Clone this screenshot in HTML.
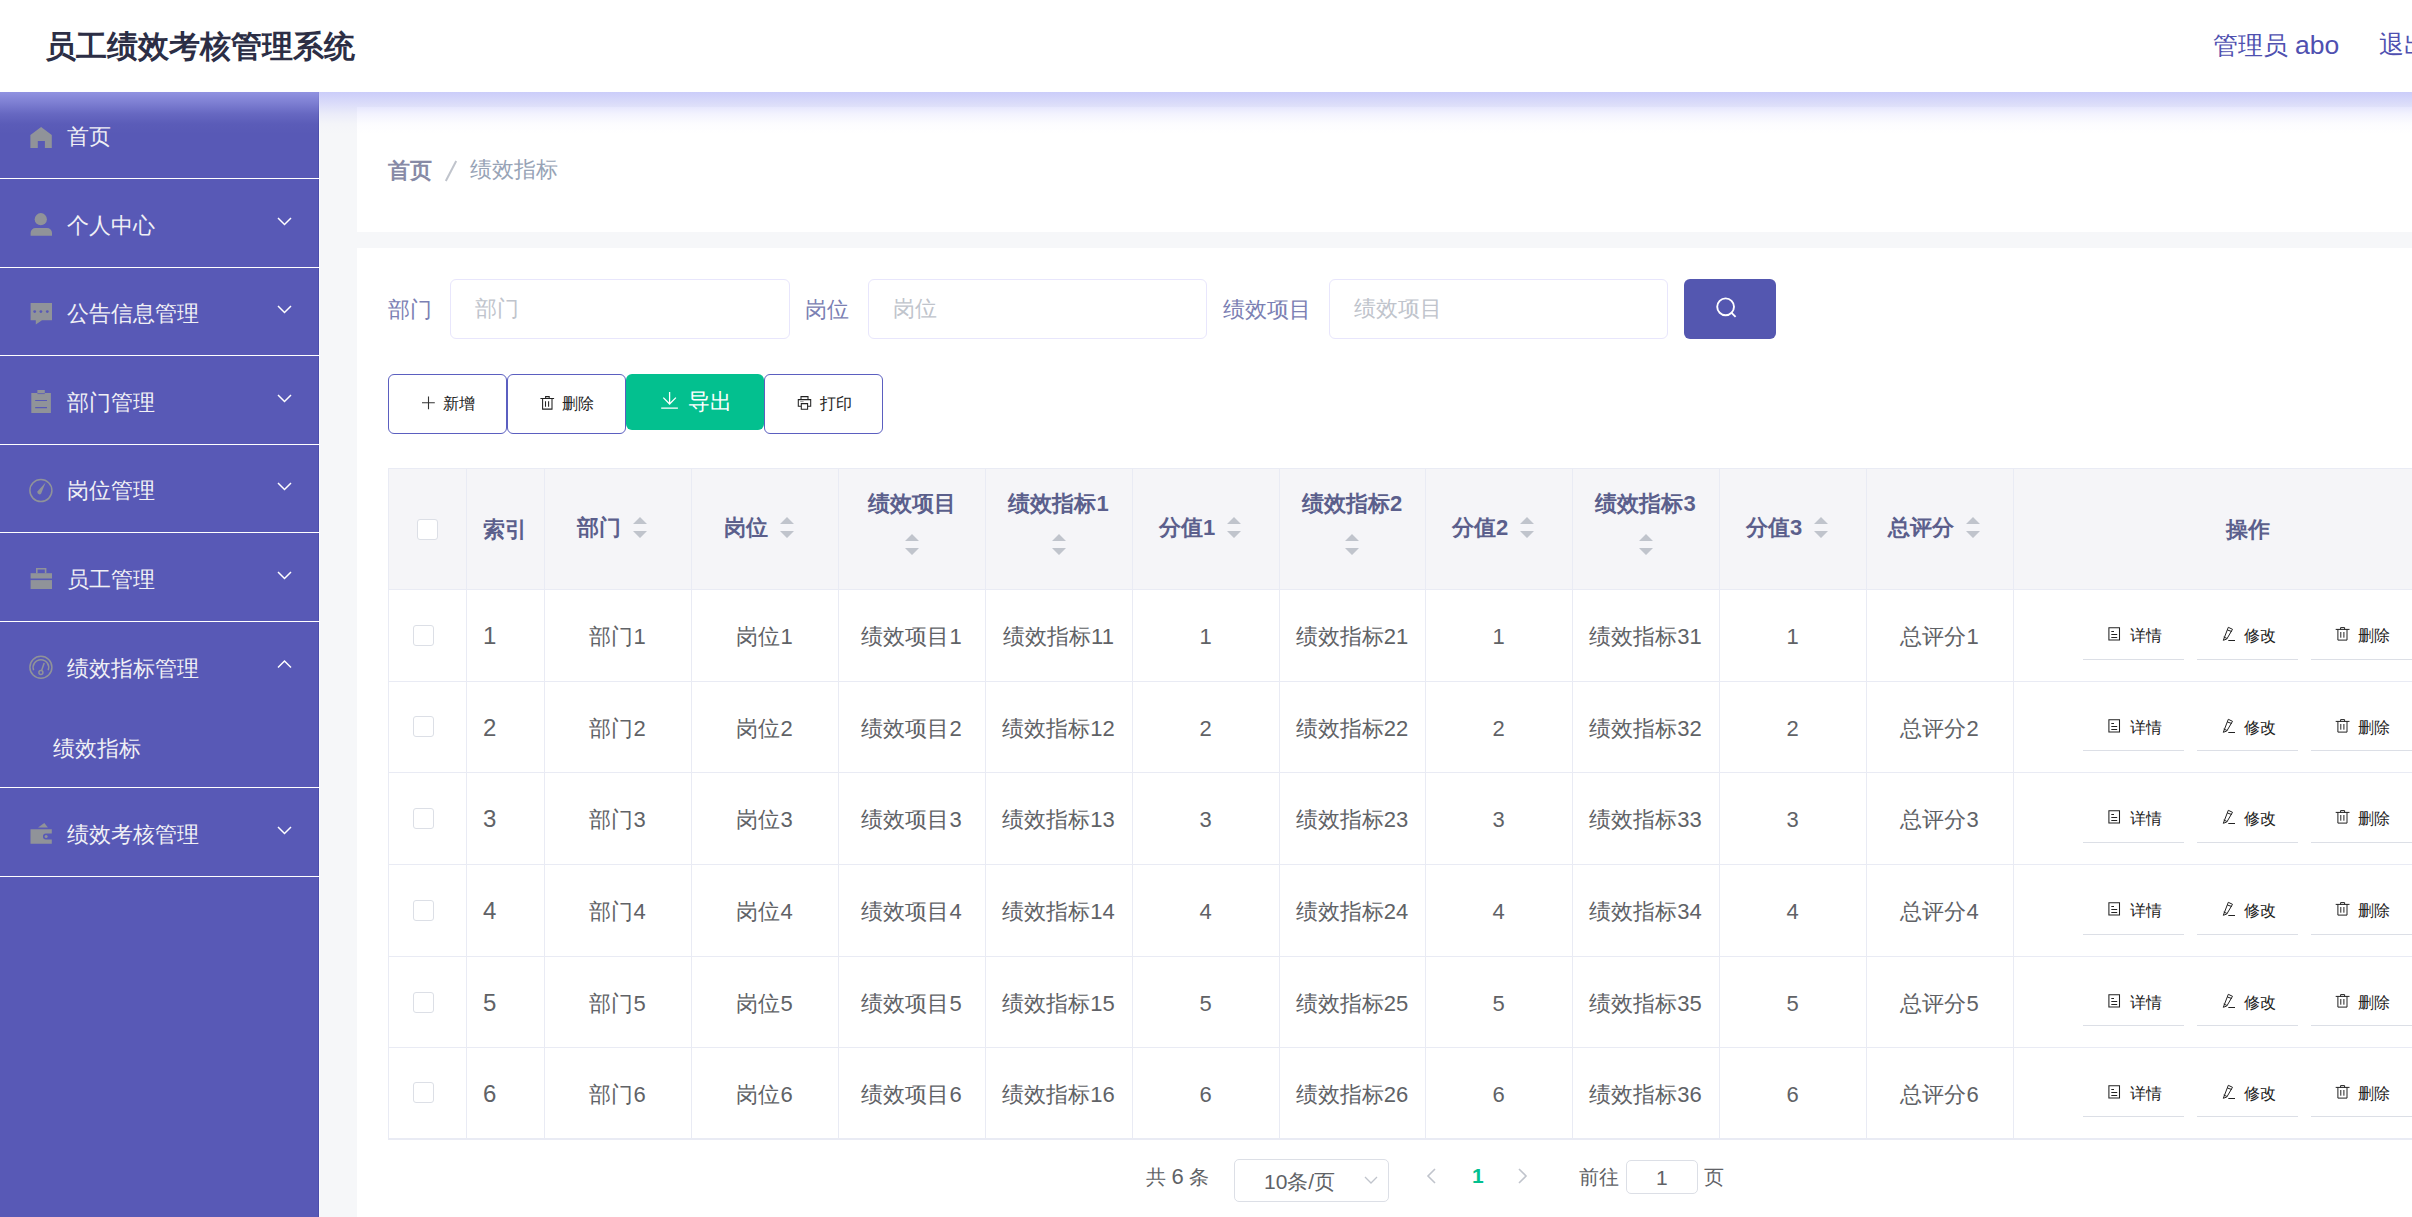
<!DOCTYPE html><html><head><meta charset="utf-8"><title>绩效指标</title><style>
*{margin:0;padding:0;box-sizing:border-box}
html,body{width:2412px;height:1217px;overflow:hidden}
body{position:relative;background:#f6f7f9;font-family:"Liberation Sans", sans-serif;}
.t{position:absolute;white-space:nowrap;line-height:1;}
.abs{position:absolute;overflow:visible}
.card{position:absolute;background:#fff}
.inp{position:absolute;border:1px solid #e8e6fc;border-radius:6px;background:#fff}
.obtn{position:absolute;border:1px solid #5b5fc0;border-radius:6px;background:#fff}
.vl{position:absolute;width:1px;background:#e9ebf4}
.hl{position:absolute;height:1px;background:#e9ebf4}
.cb{position:absolute;width:21px;height:21px;border:1px solid #dcdfe6;border-radius:3px;background:#fff}
.ul{position:absolute;height:1px;background:#dcdfe6}
.cell{position:absolute;display:flex;align-items:center;justify-content:center;white-space:nowrap;line-height:1}
</style></head><body>
<div class="abs" style="left:0;top:0;width:2412px;height:92px;background:#fff"></div>
<span id="title" class="t" style="left:45px;top:31px;font-size:31px;color:#2c2e45;font-weight:bold;">员工绩效考核管理系统</span>
<span id="user" class="t" style="left:2213px;top:32px;font-size:25px;color:#4f50b0;font-weight:normal;">管理员 <span style="font-size:26.5px">abo</span></span>
<span id="logout" class="t" style="left:2379px;top:32px;font-size:25px;color:#4f50b0;font-weight:normal;">退出</span>
<div class="abs" style="left:0;top:92px;width:319px;height:1125px;background:#5859b6"></div>
<div class="abs" style="left:318px;top:92px;width:1px;height:1125px;background:#4c4eab"></div>
<div class="abs" style="left:319px;top:92px;width:1px;height:1125px;background:#fbfbfe"></div>
<div class="abs" style="left:0;top:178px;width:319px;height:1px;background:#fff"></div>
<div class="abs" style="left:0;top:267px;width:319px;height:1px;background:#fff"></div>
<div class="abs" style="left:0;top:355px;width:319px;height:1px;background:#fff"></div>
<div class="abs" style="left:0;top:444px;width:319px;height:1px;background:#fff"></div>
<div class="abs" style="left:0;top:532px;width:319px;height:1px;background:#fff"></div>
<div class="abs" style="left:0;top:621px;width:319px;height:1px;background:#fff"></div>
<div class="abs" style="left:0;top:787px;width:319px;height:1px;background:#fff"></div>
<div class="abs" style="left:0;top:876px;width:319px;height:1px;background:#fff"></div>
<span id="m0" class="t" style="left:67px;top:126px;font-size:22px;color:#f0f0f5;font-weight:500;">首页</span>
<span id="m1" class="t" style="left:67px;top:215px;font-size:22px;color:#f0f0f5;font-weight:500;">个人中心</span>
<svg class="abs" style="left:277px;top:217px;" width="15" height="9" viewBox="0 0 15 9"><path d="M1 1l6.5 6.5L14 1" fill="none" stroke="#fff" stroke-width="1.5"/></svg>
<span id="m2" class="t" style="left:67px;top:303px;font-size:22px;color:#f0f0f5;font-weight:500;">公告信息管理</span>
<svg class="abs" style="left:277px;top:305px;" width="15" height="9" viewBox="0 0 15 9"><path d="M1 1l6.5 6.5L14 1" fill="none" stroke="#fff" stroke-width="1.5"/></svg>
<span id="m3" class="t" style="left:67px;top:392px;font-size:22px;color:#f0f0f5;font-weight:500;">部门管理</span>
<svg class="abs" style="left:277px;top:394px;" width="15" height="9" viewBox="0 0 15 9"><path d="M1 1l6.5 6.5L14 1" fill="none" stroke="#fff" stroke-width="1.5"/></svg>
<span id="m4" class="t" style="left:67px;top:480px;font-size:22px;color:#f0f0f5;font-weight:500;">岗位管理</span>
<svg class="abs" style="left:277px;top:482px;" width="15" height="9" viewBox="0 0 15 9"><path d="M1 1l6.5 6.5L14 1" fill="none" stroke="#fff" stroke-width="1.5"/></svg>
<span id="m5" class="t" style="left:67px;top:569px;font-size:22px;color:#f0f0f5;font-weight:500;">员工管理</span>
<svg class="abs" style="left:277px;top:571px;" width="15" height="9" viewBox="0 0 15 9"><path d="M1 1l6.5 6.5L14 1" fill="none" stroke="#fff" stroke-width="1.5"/></svg>
<span id="m6" class="t" style="left:67px;top:658px;font-size:22px;color:#f0f0f5;font-weight:500;">绩效指标管理</span>
<svg class="abs" style="left:277px;top:660px;" width="15" height="9" viewBox="0 0 15 9"><path d="M1 7.5L7.5 1L14 7.5" fill="none" stroke="#fff" stroke-width="1.5"/></svg>
<span id="m7" class="t" style="left:67px;top:824px;font-size:22px;color:#f0f0f5;font-weight:500;">绩效考核管理</span>
<svg class="abs" style="left:277px;top:826px;" width="15" height="9" viewBox="0 0 15 9"><path d="M1 1l6.5 6.5L14 1" fill="none" stroke="#fff" stroke-width="1.5"/></svg>
<span id="msub" class="t" style="left:53px;top:738px;font-size:22px;color:#f0f0f5;font-weight:500;">绩效指标</span>
<svg class="abs" style="left:0;top:0" width="320" height="900">
<path d="M30.4 134.9L41.1 127L51.8 134.9V148H44.9V141.1H37.8V148H30.4Z" fill="#909399"/>
<circle cx="40.8" cy="219.2" r="6.1" fill="#909399"/>
<path d="M30.6 235.8V233a5 5 0 0 1 5-5h11.4a5 5 0 0 1 5 5v2.8z" fill="#909399"/>
<path d="M30.6 303.1H52V320.2H42L35.8 324.5V320.2H30.6Z" fill="#909399"/>
<circle cx="34.7" cy="311.6" r="1.4" fill="#5859b6"/><circle cx="40.9" cy="311.6" r="1.4" fill="#5859b6"/><circle cx="47.3" cy="311.6" r="1.4" fill="#5859b6"/>
<path d="M31.3 393H37.4V390.1H44.8V393H50.9V412.9H31.3Z" fill="#909399"/>
<path d="M37.4 393.6H44.8" stroke="#5859b6" stroke-width="0.8"/>
<path d="M35.2 400.5H47M35.2 407.6H47" stroke="#5859b6" stroke-width="1.1"/>
<circle cx="40.9" cy="490.6" r="11" fill="none" stroke="#909399" stroke-width="1.5"/>
<path d="M45.6 482.6L41.2 493.6A2.2 2.2 0 0 1 37.4 491.6Z" fill="#909399"/>
<path d="M36.8 568.8H45.6V573.2" fill="none" stroke="#909399" stroke-width="1.6"/><path d="M36.8 568V573.2" stroke="#909399" stroke-width="1.6"/>
<rect x="30.6" y="573.2" width="21.4" height="5.3" fill="#909399"/>
<rect x="30.6" y="580.1" width="21.4" height="8.9" fill="#909399"/>
<circle cx="40.9" cy="667.2" r="11" fill="none" stroke="#909399" stroke-width="1.5"/>
<path d="M33.6 670.2A7.8 7.8 0 1 1 48.2 670.2" fill="none" stroke="#909399" stroke-width="1.5"/>
<circle cx="40.9" cy="672.6" r="2" fill="none" stroke="#909399" stroke-width="1.5"/>
<path d="M41.6 670.6L44.2 663" stroke="#909399" stroke-width="1.5"/>
<path d="M30.5 829.2H51.8V833.5H46A3 3 0 0 0 46 839.6H51.8V843.8H30.5Z" fill="#909399"/>
<circle cx="46.1" cy="836.5" r="1.5" fill="#909399"/>
<path d="M38 827.4H47.9L44.3 823Z" fill="#909399"/>
</svg>
<div class="card" style="left:357px;top:107px;width:2055px;height:125px"></div>
<div class="card" style="left:357px;top:248px;width:2055px;height:969px"></div>
<span id="bc1" class="t" style="left:388px;top:160px;font-size:22px;color:#878aa6;font-weight:bold;">首页</span>
<svg class="abs" style="left:440px;top:155px;" width="22" height="30" viewBox="0 0 22 30"><path d="M16.2 6L5.8 26" stroke="#c0c4cc" stroke-width="2"/></svg>
<span id="bc3" class="t" style="left:470px;top:159px;font-size:22px;color:#97a3b6;font-weight:normal;">绩效指标</span>
<span id="l1" class="t" style="left:388px;top:299px;font-size:22px;color:#7b80b3;font-weight:normal;">部门</span>
<div class="inp" style="left:450px;top:279px;width:340px;height:60px"></div>
<span id="l1p" class="t" style="left:475px;top:298px;font-size:22px;color:#c0c4cc;font-weight:normal;">部门</span>
<span id="l2" class="t" style="left:805px;top:299px;font-size:22px;color:#7b80b3;font-weight:normal;">岗位</span>
<div class="inp" style="left:868px;top:279px;width:339px;height:60px"></div>
<span id="l2p" class="t" style="left:893px;top:298px;font-size:22px;color:#c0c4cc;font-weight:normal;">岗位</span>
<span id="l3" class="t" style="left:1223px;top:299px;font-size:22px;color:#7b80b3;font-weight:normal;">绩效项目</span>
<div class="inp" style="left:1329px;top:279px;width:339px;height:60px"></div>
<span id="l3p" class="t" style="left:1354px;top:298px;font-size:22px;color:#c0c4cc;font-weight:normal;">绩效项目</span>
<div class="abs" style="left:1684px;top:279px;width:92px;height:60px;background:#5457b0;border-radius:6px"></div>
<svg class="abs" style="left:1684px;top:279px;" width="92" height="60" viewBox="0 0 92 60"><circle cx="41.6" cy="27.8" r="8.4" fill="none" stroke="#fff" stroke-width="1.9"/><path d="M47.6 33.8L51.6 37.8" stroke="#fff" stroke-width="1.9"/></svg>
<div class="obtn" style="left:388px;top:374px;width:119px;height:60px"></div>
<div class="obtn" style="left:507px;top:374px;width:119px;height:60px"></div>
<div class="abs" style="left:626px;top:374px;width:138px;height:56px;background:#03c08f;border-radius:6px"></div>
<div class="obtn" style="left:764px;top:374px;width:119px;height:60px"></div>
<span id="b1" class="t" style="left:443px;top:396px;font-size:16px;color:#222;font-weight:normal;">新增</span>
<span id="b2" class="t" style="left:562px;top:396px;font-size:16px;color:#222;font-weight:normal;">删除</span>
<span id="b3" class="t" style="left:688px;top:391px;font-size:22px;color:#fff;font-weight:normal;">导出</span>
<span id="b4" class="t" style="left:820px;top:396px;font-size:16px;color:#222;font-weight:normal;">打印</span>
<svg class="abs" style="left:0px;top:0px;width:900px;height:420px" width="900" height="420" viewBox="0 0 900 420">
<path d="M428.5 396.6V409.2M422 402.8H434.8" stroke="#333" stroke-width="1.1"/>
<path d="M540.4 398.4H554.1M545.6 398.4V396.6H549.2V398.4M542.6 398.4V409.1H552V398.4M545.5 401.2V406.7M548.6 401.2V406.7" fill="none" stroke="#222" stroke-width="1.05"/>
<path d="M669.6 392V404.5M663.3 397.6L669.6 404L675.9 397.6M661.2 408.2H677.9" fill="none" stroke="#fff" stroke-width="1.3"/>
<path d="M801 399.3V396.6H808V399.3M801.3 406.3H798.3V399.6H810.7V406.3H807.6M801.3 403.6H807.6V409.2H801.3Z" fill="none" stroke="#222" stroke-width="1.05"/>
<path d="M800.2 401.6H803.6" stroke="#888" stroke-width="0.8"/>
</svg>
<div class="abs" style="left:388px;top:468px;width:2024px;height:121px;background:#f5f5f8"></div>
<div class="hl" style="left:388px;top:468px;width:2024px"></div>
<div class="hl" style="left:388px;top:589px;width:2024px"></div>
<div class="hl" style="left:388px;top:681px;width:2024px"></div>
<div class="hl" style="left:388px;top:772px;width:2024px"></div>
<div class="hl" style="left:388px;top:864px;width:2024px"></div>
<div class="hl" style="left:388px;top:956px;width:2024px"></div>
<div class="hl" style="left:388px;top:1047px;width:2024px"></div>
<div class="hl" style="left:388px;top:1138px;width:2024px"></div>
<div class="hl" style="left:388px;top:1138px;width:2024px;height:2px"></div>
<div class="vl" style="left:388px;top:468px;height:670px"></div>
<div class="vl" style="left:466px;top:468px;height:670px"></div>
<div class="vl" style="left:544px;top:468px;height:670px"></div>
<div class="vl" style="left:691px;top:468px;height:670px"></div>
<div class="vl" style="left:838px;top:468px;height:670px"></div>
<div class="vl" style="left:985px;top:468px;height:670px"></div>
<div class="vl" style="left:1132px;top:468px;height:670px"></div>
<div class="vl" style="left:1279px;top:468px;height:670px"></div>
<div class="vl" style="left:1425px;top:468px;height:670px"></div>
<div class="vl" style="left:1572px;top:468px;height:670px"></div>
<div class="vl" style="left:1719px;top:468px;height:670px"></div>
<div class="vl" style="left:1866px;top:468px;height:670px"></div>
<div class="vl" style="left:2013px;top:468px;height:670px"></div>
<div class="cb" style="left:417px;top:519px"></div>
<div class="cell" style="left:466px;top:468px;width:78px;height:121px;font-size:22px;font-weight:bold;color:#5b5f8c"><span id="h1" style="position:relative;top:1px">索引</span></div>
<div class="cell" style="left:544px;top:468px;width:147px;height:121px;font-size:22px;font-weight:bold;color:#5b5f8c"><span id="h2" style="position:relative;top:-0.5px">部门</span><span style="margin-left:12px;margin-right:11px;position:relative;top:-1px"><svg width="14" height="22" style="display:block"><path d="M0 7L7 0L14 7z M0 14h14L7 21z" fill="#c0c4cc"/></svg></span></div>
<div class="cell" style="left:691px;top:468px;width:147px;height:121px;font-size:22px;font-weight:bold;color:#5b5f8c"><span id="h3" style="position:relative;top:-0.5px">岗位</span><span style="margin-left:12px;margin-right:11px;position:relative;top:-1px"><svg width="14" height="22" style="display:block"><path d="M0 7L7 0L14 7z M0 14h14L7 21z" fill="#c0c4cc"/></svg></span></div>
<div class="cell" style="left:838px;top:468px;width:147px;height:121px;font-size:22px;font-weight:bold;color:#5b5f8c;flex-direction:column"><span id="h4" style="display:block;margin-bottom:20px;position:relative;top:-4px">绩效项目</span><span style="position:relative;top:-5px"><svg width="14" height="22" style="display:block"><path d="M0 7L7 0L14 7z M0 14h14L7 21z" fill="#c0c4cc"/></svg></span></div>
<div class="cell" style="left:985px;top:468px;width:147px;height:121px;font-size:22px;font-weight:bold;color:#5b5f8c;flex-direction:column"><span id="h5" style="display:block;margin-bottom:20px;position:relative;top:-4px">绩效指标1</span><span style="position:relative;top:-5px"><svg width="14" height="22" style="display:block"><path d="M0 7L7 0L14 7z M0 14h14L7 21z" fill="#c0c4cc"/></svg></span></div>
<div class="cell" style="left:1132px;top:468px;width:147px;height:121px;font-size:22px;font-weight:bold;color:#5b5f8c"><span id="h6" style="position:relative;top:-0.5px">分值1</span><span style="margin-left:12px;margin-right:11px;position:relative;top:-1px"><svg width="14" height="22" style="display:block"><path d="M0 7L7 0L14 7z M0 14h14L7 21z" fill="#c0c4cc"/></svg></span></div>
<div class="cell" style="left:1279px;top:468px;width:146px;height:121px;font-size:22px;font-weight:bold;color:#5b5f8c;flex-direction:column"><span id="h7" style="display:block;margin-bottom:20px;position:relative;top:-4px">绩效指标2</span><span style="position:relative;top:-5px"><svg width="14" height="22" style="display:block"><path d="M0 7L7 0L14 7z M0 14h14L7 21z" fill="#c0c4cc"/></svg></span></div>
<div class="cell" style="left:1425px;top:468px;width:147px;height:121px;font-size:22px;font-weight:bold;color:#5b5f8c"><span id="h8" style="position:relative;top:-0.5px">分值2</span><span style="margin-left:12px;margin-right:11px;position:relative;top:-1px"><svg width="14" height="22" style="display:block"><path d="M0 7L7 0L14 7z M0 14h14L7 21z" fill="#c0c4cc"/></svg></span></div>
<div class="cell" style="left:1572px;top:468px;width:147px;height:121px;font-size:22px;font-weight:bold;color:#5b5f8c;flex-direction:column"><span id="h9" style="display:block;margin-bottom:20px;position:relative;top:-4px">绩效指标3</span><span style="position:relative;top:-5px"><svg width="14" height="22" style="display:block"><path d="M0 7L7 0L14 7z M0 14h14L7 21z" fill="#c0c4cc"/></svg></span></div>
<div class="cell" style="left:1719px;top:468px;width:147px;height:121px;font-size:22px;font-weight:bold;color:#5b5f8c"><span id="h10" style="position:relative;top:-0.5px">分值3</span><span style="margin-left:12px;margin-right:11px;position:relative;top:-1px"><svg width="14" height="22" style="display:block"><path d="M0 7L7 0L14 7z M0 14h14L7 21z" fill="#c0c4cc"/></svg></span></div>
<div class="cell" style="left:1866px;top:468px;width:147px;height:121px;font-size:22px;font-weight:bold;color:#5b5f8c"><span id="h11" style="position:relative;top:-0.5px">总评分</span><span style="margin-left:12px;margin-right:11px;position:relative;top:-1px"><svg width="14" height="22" style="display:block"><path d="M0 7L7 0L14 7z M0 14h14L7 21z" fill="#c0c4cc"/></svg></span></div>
<div class="cell" style="left:2013px;top:468px;width:470px;height:121px;font-size:22px;font-weight:bold;color:#5b5f8c"><span id="h12" style="position:relative;top:1px">操作</span></div>
<div class="cb" style="left:413px;top:625px"></div>
<span id="r1i" class="t" style="left:483px;top:624px;font-size:24px;color:#606266">1</span>
<div class="cell" style="left:544px;top:589px;width:147px;height:92px;font-size:22px;color:#606266"><span id="r1c2" style="position:relative;top:2px">部门1</span></div>
<div class="cell" style="left:691px;top:589px;width:147px;height:92px;font-size:22px;color:#606266"><span id="r1c3" style="position:relative;top:2px">岗位1</span></div>
<div class="cell" style="left:838px;top:589px;width:147px;height:92px;font-size:22px;color:#606266"><span id="r1c4" style="position:relative;top:2px">绩效项目1</span></div>
<div class="cell" style="left:985px;top:589px;width:147px;height:92px;font-size:22px;color:#606266"><span id="r1c5" style="position:relative;top:2px">绩效指标11</span></div>
<div class="cell" style="left:1132px;top:589px;width:147px;height:92px;font-size:22px;color:#606266"><span id="r1c6" style="position:relative;top:2px">1</span></div>
<div class="cell" style="left:1279px;top:589px;width:146px;height:92px;font-size:22px;color:#606266"><span id="r1c7" style="position:relative;top:2px">绩效指标21</span></div>
<div class="cell" style="left:1425px;top:589px;width:147px;height:92px;font-size:22px;color:#606266"><span id="r1c8" style="position:relative;top:2px">1</span></div>
<div class="cell" style="left:1572px;top:589px;width:147px;height:92px;font-size:22px;color:#606266"><span id="r1c9" style="position:relative;top:2px">绩效指标31</span></div>
<div class="cell" style="left:1719px;top:589px;width:147px;height:92px;font-size:22px;color:#606266"><span id="r1c10" style="position:relative;top:2px">1</span></div>
<div class="cell" style="left:1866px;top:589px;width:147px;height:92px;font-size:22px;color:#606266"><span id="r1c11" style="position:relative;top:2px">总评分1</span></div>
<div class="ul" style="left:2083px;top:659px;width:101px"></div>
<span id="op1r1" class="t" style="left:2130px;top:628px;font-size:16px;color:#222">详情</span>
<div class="ul" style="left:2197px;top:659px;width:101px"></div>
<span id="op2r1" class="t" style="left:2244px;top:628px;font-size:16px;color:#222">修改</span>
<div class="ul" style="left:2311px;top:659px;width:101px"></div>
<span id="op3r1" class="t" style="left:2358px;top:628px;font-size:16px;color:#222">删除</span>
<svg class="abs" style="left:2100px;top:620px;" width="300" height="30" viewBox="0 0 300 30">
<path d="M8.9 7.8H19.5V20H8.9Z" fill="none" stroke="#222" stroke-width="1.05"/>
<path d="M11.3 11.5H14M11.3 14.5H17.2M11.3 17.5H17.2" stroke="#222" stroke-width="1"/>
<path d="M128.3 7.3L132.5 9.3L126.8 19L123.3 20.3Z M127.4 10L131.8 11.5 M123.7 17L126.9 18.4" fill="none" stroke="#222" stroke-width="1"/>
<path d="M128.3 20.5H135" stroke="#222" stroke-width="1"/>
<path d="M235.7 9.4H249.5M240.6 9.4V7.6H244.6V9.4M237.9 9.4V20.1H247V9.4M240.8 12V17.7M243.9 12V17.7" fill="none" stroke="#222" stroke-width="1"/>
</svg>
<div class="cb" style="left:413px;top:716px"></div>
<span id="r2i" class="t" style="left:483px;top:716px;font-size:24px;color:#606266">2</span>
<div class="cell" style="left:544px;top:681px;width:147px;height:91px;font-size:22px;color:#606266"><span id="r2c2" style="position:relative;top:2px">部门2</span></div>
<div class="cell" style="left:691px;top:681px;width:147px;height:91px;font-size:22px;color:#606266"><span id="r2c3" style="position:relative;top:2px">岗位2</span></div>
<div class="cell" style="left:838px;top:681px;width:147px;height:91px;font-size:22px;color:#606266"><span id="r2c4" style="position:relative;top:2px">绩效项目2</span></div>
<div class="cell" style="left:985px;top:681px;width:147px;height:91px;font-size:22px;color:#606266"><span id="r2c5" style="position:relative;top:2px">绩效指标12</span></div>
<div class="cell" style="left:1132px;top:681px;width:147px;height:91px;font-size:22px;color:#606266"><span id="r2c6" style="position:relative;top:2px">2</span></div>
<div class="cell" style="left:1279px;top:681px;width:146px;height:91px;font-size:22px;color:#606266"><span id="r2c7" style="position:relative;top:2px">绩效指标22</span></div>
<div class="cell" style="left:1425px;top:681px;width:147px;height:91px;font-size:22px;color:#606266"><span id="r2c8" style="position:relative;top:2px">2</span></div>
<div class="cell" style="left:1572px;top:681px;width:147px;height:91px;font-size:22px;color:#606266"><span id="r2c9" style="position:relative;top:2px">绩效指标32</span></div>
<div class="cell" style="left:1719px;top:681px;width:147px;height:91px;font-size:22px;color:#606266"><span id="r2c10" style="position:relative;top:2px">2</span></div>
<div class="cell" style="left:1866px;top:681px;width:147px;height:91px;font-size:22px;color:#606266"><span id="r2c11" style="position:relative;top:2px">总评分2</span></div>
<div class="ul" style="left:2083px;top:750px;width:101px"></div>
<span id="op1r2" class="t" style="left:2130px;top:720px;font-size:16px;color:#222">详情</span>
<div class="ul" style="left:2197px;top:750px;width:101px"></div>
<span id="op2r2" class="t" style="left:2244px;top:720px;font-size:16px;color:#222">修改</span>
<div class="ul" style="left:2311px;top:750px;width:101px"></div>
<span id="op3r2" class="t" style="left:2358px;top:720px;font-size:16px;color:#222">删除</span>
<svg class="abs" style="left:2100px;top:712px;" width="300" height="30" viewBox="0 0 300 30">
<path d="M8.9 7.8H19.5V20H8.9Z" fill="none" stroke="#222" stroke-width="1.05"/>
<path d="M11.3 11.5H14M11.3 14.5H17.2M11.3 17.5H17.2" stroke="#222" stroke-width="1"/>
<path d="M128.3 7.3L132.5 9.3L126.8 19L123.3 20.3Z M127.4 10L131.8 11.5 M123.7 17L126.9 18.4" fill="none" stroke="#222" stroke-width="1"/>
<path d="M128.3 20.5H135" stroke="#222" stroke-width="1"/>
<path d="M235.7 9.4H249.5M240.6 9.4V7.6H244.6V9.4M237.9 9.4V20.1H247V9.4M240.8 12V17.7M243.9 12V17.7" fill="none" stroke="#222" stroke-width="1"/>
</svg>
<div class="cb" style="left:413px;top:808px"></div>
<span id="r3i" class="t" style="left:483px;top:807px;font-size:24px;color:#606266">3</span>
<div class="cell" style="left:544px;top:772px;width:147px;height:92px;font-size:22px;color:#606266"><span id="r3c2" style="position:relative;top:2px">部门3</span></div>
<div class="cell" style="left:691px;top:772px;width:147px;height:92px;font-size:22px;color:#606266"><span id="r3c3" style="position:relative;top:2px">岗位3</span></div>
<div class="cell" style="left:838px;top:772px;width:147px;height:92px;font-size:22px;color:#606266"><span id="r3c4" style="position:relative;top:2px">绩效项目3</span></div>
<div class="cell" style="left:985px;top:772px;width:147px;height:92px;font-size:22px;color:#606266"><span id="r3c5" style="position:relative;top:2px">绩效指标13</span></div>
<div class="cell" style="left:1132px;top:772px;width:147px;height:92px;font-size:22px;color:#606266"><span id="r3c6" style="position:relative;top:2px">3</span></div>
<div class="cell" style="left:1279px;top:772px;width:146px;height:92px;font-size:22px;color:#606266"><span id="r3c7" style="position:relative;top:2px">绩效指标23</span></div>
<div class="cell" style="left:1425px;top:772px;width:147px;height:92px;font-size:22px;color:#606266"><span id="r3c8" style="position:relative;top:2px">3</span></div>
<div class="cell" style="left:1572px;top:772px;width:147px;height:92px;font-size:22px;color:#606266"><span id="r3c9" style="position:relative;top:2px">绩效指标33</span></div>
<div class="cell" style="left:1719px;top:772px;width:147px;height:92px;font-size:22px;color:#606266"><span id="r3c10" style="position:relative;top:2px">3</span></div>
<div class="cell" style="left:1866px;top:772px;width:147px;height:92px;font-size:22px;color:#606266"><span id="r3c11" style="position:relative;top:2px">总评分3</span></div>
<div class="ul" style="left:2083px;top:842px;width:101px"></div>
<span id="op1r3" class="t" style="left:2130px;top:811px;font-size:16px;color:#222">详情</span>
<div class="ul" style="left:2197px;top:842px;width:101px"></div>
<span id="op2r3" class="t" style="left:2244px;top:811px;font-size:16px;color:#222">修改</span>
<div class="ul" style="left:2311px;top:842px;width:101px"></div>
<span id="op3r3" class="t" style="left:2358px;top:811px;font-size:16px;color:#222">删除</span>
<svg class="abs" style="left:2100px;top:803px;" width="300" height="30" viewBox="0 0 300 30">
<path d="M8.9 7.8H19.5V20H8.9Z" fill="none" stroke="#222" stroke-width="1.05"/>
<path d="M11.3 11.5H14M11.3 14.5H17.2M11.3 17.5H17.2" stroke="#222" stroke-width="1"/>
<path d="M128.3 7.3L132.5 9.3L126.8 19L123.3 20.3Z M127.4 10L131.8 11.5 M123.7 17L126.9 18.4" fill="none" stroke="#222" stroke-width="1"/>
<path d="M128.3 20.5H135" stroke="#222" stroke-width="1"/>
<path d="M235.7 9.4H249.5M240.6 9.4V7.6H244.6V9.4M237.9 9.4V20.1H247V9.4M240.8 12V17.7M243.9 12V17.7" fill="none" stroke="#222" stroke-width="1"/>
</svg>
<div class="cb" style="left:413px;top:900px"></div>
<span id="r4i" class="t" style="left:483px;top:899px;font-size:24px;color:#606266">4</span>
<div class="cell" style="left:544px;top:864px;width:147px;height:92px;font-size:22px;color:#606266"><span id="r4c2" style="position:relative;top:2px">部门4</span></div>
<div class="cell" style="left:691px;top:864px;width:147px;height:92px;font-size:22px;color:#606266"><span id="r4c3" style="position:relative;top:2px">岗位4</span></div>
<div class="cell" style="left:838px;top:864px;width:147px;height:92px;font-size:22px;color:#606266"><span id="r4c4" style="position:relative;top:2px">绩效项目4</span></div>
<div class="cell" style="left:985px;top:864px;width:147px;height:92px;font-size:22px;color:#606266"><span id="r4c5" style="position:relative;top:2px">绩效指标14</span></div>
<div class="cell" style="left:1132px;top:864px;width:147px;height:92px;font-size:22px;color:#606266"><span id="r4c6" style="position:relative;top:2px">4</span></div>
<div class="cell" style="left:1279px;top:864px;width:146px;height:92px;font-size:22px;color:#606266"><span id="r4c7" style="position:relative;top:2px">绩效指标24</span></div>
<div class="cell" style="left:1425px;top:864px;width:147px;height:92px;font-size:22px;color:#606266"><span id="r4c8" style="position:relative;top:2px">4</span></div>
<div class="cell" style="left:1572px;top:864px;width:147px;height:92px;font-size:22px;color:#606266"><span id="r4c9" style="position:relative;top:2px">绩效指标34</span></div>
<div class="cell" style="left:1719px;top:864px;width:147px;height:92px;font-size:22px;color:#606266"><span id="r4c10" style="position:relative;top:2px">4</span></div>
<div class="cell" style="left:1866px;top:864px;width:147px;height:92px;font-size:22px;color:#606266"><span id="r4c11" style="position:relative;top:2px">总评分4</span></div>
<div class="ul" style="left:2083px;top:934px;width:101px"></div>
<span id="op1r4" class="t" style="left:2130px;top:903px;font-size:16px;color:#222">详情</span>
<div class="ul" style="left:2197px;top:934px;width:101px"></div>
<span id="op2r4" class="t" style="left:2244px;top:903px;font-size:16px;color:#222">修改</span>
<div class="ul" style="left:2311px;top:934px;width:101px"></div>
<span id="op3r4" class="t" style="left:2358px;top:903px;font-size:16px;color:#222">删除</span>
<svg class="abs" style="left:2100px;top:895px;" width="300" height="30" viewBox="0 0 300 30">
<path d="M8.9 7.8H19.5V20H8.9Z" fill="none" stroke="#222" stroke-width="1.05"/>
<path d="M11.3 11.5H14M11.3 14.5H17.2M11.3 17.5H17.2" stroke="#222" stroke-width="1"/>
<path d="M128.3 7.3L132.5 9.3L126.8 19L123.3 20.3Z M127.4 10L131.8 11.5 M123.7 17L126.9 18.4" fill="none" stroke="#222" stroke-width="1"/>
<path d="M128.3 20.5H135" stroke="#222" stroke-width="1"/>
<path d="M235.7 9.4H249.5M240.6 9.4V7.6H244.6V9.4M237.9 9.4V20.1H247V9.4M240.8 12V17.7M243.9 12V17.7" fill="none" stroke="#222" stroke-width="1"/>
</svg>
<div class="cb" style="left:413px;top:992px"></div>
<span id="r5i" class="t" style="left:483px;top:991px;font-size:24px;color:#606266">5</span>
<div class="cell" style="left:544px;top:956px;width:147px;height:91px;font-size:22px;color:#606266"><span id="r5c2" style="position:relative;top:2px">部门5</span></div>
<div class="cell" style="left:691px;top:956px;width:147px;height:91px;font-size:22px;color:#606266"><span id="r5c3" style="position:relative;top:2px">岗位5</span></div>
<div class="cell" style="left:838px;top:956px;width:147px;height:91px;font-size:22px;color:#606266"><span id="r5c4" style="position:relative;top:2px">绩效项目5</span></div>
<div class="cell" style="left:985px;top:956px;width:147px;height:91px;font-size:22px;color:#606266"><span id="r5c5" style="position:relative;top:2px">绩效指标15</span></div>
<div class="cell" style="left:1132px;top:956px;width:147px;height:91px;font-size:22px;color:#606266"><span id="r5c6" style="position:relative;top:2px">5</span></div>
<div class="cell" style="left:1279px;top:956px;width:146px;height:91px;font-size:22px;color:#606266"><span id="r5c7" style="position:relative;top:2px">绩效指标25</span></div>
<div class="cell" style="left:1425px;top:956px;width:147px;height:91px;font-size:22px;color:#606266"><span id="r5c8" style="position:relative;top:2px">5</span></div>
<div class="cell" style="left:1572px;top:956px;width:147px;height:91px;font-size:22px;color:#606266"><span id="r5c9" style="position:relative;top:2px">绩效指标35</span></div>
<div class="cell" style="left:1719px;top:956px;width:147px;height:91px;font-size:22px;color:#606266"><span id="r5c10" style="position:relative;top:2px">5</span></div>
<div class="cell" style="left:1866px;top:956px;width:147px;height:91px;font-size:22px;color:#606266"><span id="r5c11" style="position:relative;top:2px">总评分5</span></div>
<div class="ul" style="left:2083px;top:1025px;width:101px"></div>
<span id="op1r5" class="t" style="left:2130px;top:995px;font-size:16px;color:#222">详情</span>
<div class="ul" style="left:2197px;top:1025px;width:101px"></div>
<span id="op2r5" class="t" style="left:2244px;top:995px;font-size:16px;color:#222">修改</span>
<div class="ul" style="left:2311px;top:1025px;width:101px"></div>
<span id="op3r5" class="t" style="left:2358px;top:995px;font-size:16px;color:#222">删除</span>
<svg class="abs" style="left:2100px;top:987px;" width="300" height="30" viewBox="0 0 300 30">
<path d="M8.9 7.8H19.5V20H8.9Z" fill="none" stroke="#222" stroke-width="1.05"/>
<path d="M11.3 11.5H14M11.3 14.5H17.2M11.3 17.5H17.2" stroke="#222" stroke-width="1"/>
<path d="M128.3 7.3L132.5 9.3L126.8 19L123.3 20.3Z M127.4 10L131.8 11.5 M123.7 17L126.9 18.4" fill="none" stroke="#222" stroke-width="1"/>
<path d="M128.3 20.5H135" stroke="#222" stroke-width="1"/>
<path d="M235.7 9.4H249.5M240.6 9.4V7.6H244.6V9.4M237.9 9.4V20.1H247V9.4M240.8 12V17.7M243.9 12V17.7" fill="none" stroke="#222" stroke-width="1"/>
</svg>
<div class="cb" style="left:413px;top:1082px"></div>
<span id="r6i" class="t" style="left:483px;top:1082px;font-size:24px;color:#606266">6</span>
<div class="cell" style="left:544px;top:1047px;width:147px;height:91px;font-size:22px;color:#606266"><span id="r6c2" style="position:relative;top:2px">部门6</span></div>
<div class="cell" style="left:691px;top:1047px;width:147px;height:91px;font-size:22px;color:#606266"><span id="r6c3" style="position:relative;top:2px">岗位6</span></div>
<div class="cell" style="left:838px;top:1047px;width:147px;height:91px;font-size:22px;color:#606266"><span id="r6c4" style="position:relative;top:2px">绩效项目6</span></div>
<div class="cell" style="left:985px;top:1047px;width:147px;height:91px;font-size:22px;color:#606266"><span id="r6c5" style="position:relative;top:2px">绩效指标16</span></div>
<div class="cell" style="left:1132px;top:1047px;width:147px;height:91px;font-size:22px;color:#606266"><span id="r6c6" style="position:relative;top:2px">6</span></div>
<div class="cell" style="left:1279px;top:1047px;width:146px;height:91px;font-size:22px;color:#606266"><span id="r6c7" style="position:relative;top:2px">绩效指标26</span></div>
<div class="cell" style="left:1425px;top:1047px;width:147px;height:91px;font-size:22px;color:#606266"><span id="r6c8" style="position:relative;top:2px">6</span></div>
<div class="cell" style="left:1572px;top:1047px;width:147px;height:91px;font-size:22px;color:#606266"><span id="r6c9" style="position:relative;top:2px">绩效指标36</span></div>
<div class="cell" style="left:1719px;top:1047px;width:147px;height:91px;font-size:22px;color:#606266"><span id="r6c10" style="position:relative;top:2px">6</span></div>
<div class="cell" style="left:1866px;top:1047px;width:147px;height:91px;font-size:22px;color:#606266"><span id="r6c11" style="position:relative;top:2px">总评分6</span></div>
<div class="ul" style="left:2083px;top:1116px;width:101px"></div>
<span id="op1r6" class="t" style="left:2130px;top:1086px;font-size:16px;color:#222">详情</span>
<div class="ul" style="left:2197px;top:1116px;width:101px"></div>
<span id="op2r6" class="t" style="left:2244px;top:1086px;font-size:16px;color:#222">修改</span>
<div class="ul" style="left:2311px;top:1116px;width:101px"></div>
<span id="op3r6" class="t" style="left:2358px;top:1086px;font-size:16px;color:#222">删除</span>
<svg class="abs" style="left:2100px;top:1078px;" width="300" height="30" viewBox="0 0 300 30">
<path d="M8.9 7.8H19.5V20H8.9Z" fill="none" stroke="#222" stroke-width="1.05"/>
<path d="M11.3 11.5H14M11.3 14.5H17.2M11.3 17.5H17.2" stroke="#222" stroke-width="1"/>
<path d="M128.3 7.3L132.5 9.3L126.8 19L123.3 20.3Z M127.4 10L131.8 11.5 M123.7 17L126.9 18.4" fill="none" stroke="#222" stroke-width="1"/>
<path d="M128.3 20.5H135" stroke="#222" stroke-width="1"/>
<path d="M235.7 9.4H249.5M240.6 9.4V7.6H244.6V9.4M237.9 9.4V20.1H247V9.4M240.8 12V17.7M243.9 12V17.7" fill="none" stroke="#222" stroke-width="1"/>
</svg>
<span id="p1" class="t" style="left:1146px;top:1166px;font-size:20px;color:#606266;font-weight:normal;">共 <span style="font-size:22px">6</span> 条</span>
<div class="abs" style="left:1234px;top:1159px;width:155px;height:43px;border:1px solid #dcdfe6;border-radius:5px"></div>
<span id="p2" class="t" style="left:1264px;top:1171px;font-size:21px;color:#606266;font-weight:normal;">10条/页</span>
<svg class="abs" style="left:1364px;top:1176px;" width="14" height="9" viewBox="0 0 14 9"><path d="M1 1l6 6l6-6" fill="none" stroke="#c0c4cc" stroke-width="1.3"/></svg>
<svg class="abs" style="left:1426px;top:1168px;" width="10" height="16" viewBox="0 0 10 16"><path d="M9 1L2 8l7 7" fill="none" stroke="#c0c4cc" stroke-width="1.6"/></svg>
<span id="p3" class="t" style="left:1472px;top:1165px;font-size:21px;color:#03c08f;font-weight:bold;">1</span>
<svg class="abs" style="left:1518px;top:1168px;" width="10" height="16" viewBox="0 0 10 16"><path d="M1 1l7 7l-7 7" fill="none" stroke="#c0c4cc" stroke-width="1.6"/></svg>
<span id="p4" class="t" style="left:1579px;top:1167px;font-size:20px;color:#606266;font-weight:normal;">前往</span>
<div class="abs" style="left:1626px;top:1160px;width:72px;height:34px;border:1px solid #dcdfe6;border-radius:5px"></div>
<span id="p5" class="t" style="left:1656px;top:1167px;font-size:21px;color:#606266;font-weight:normal;">1</span>
<span id="p6" class="t" style="left:1704px;top:1167px;font-size:20px;color:#606266;font-weight:normal;">页</span>
<div class="abs" style="left:0;top:92px;width:2412px;height:42px;background:linear-gradient(rgba(178,180,250,0.63) 0px,rgba(178,180,250,0.43) 10px,rgba(178,180,250,0.16) 22px,rgba(178,180,250,0.03) 32px,rgba(178,180,250,0) 42px)"></div>
</body></html>
